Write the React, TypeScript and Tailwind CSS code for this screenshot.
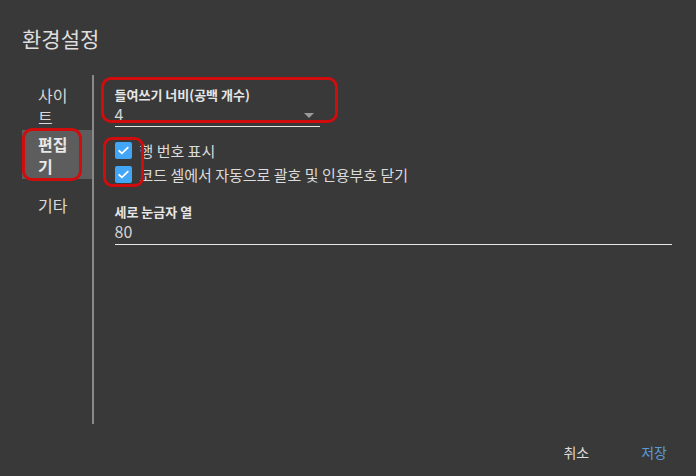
import React from 'react';

const font = { fontFamily: '"Noto Sans CJK KR", "Noto Sans", sans-serif' };

const Check = () => (
    <span className="w-[17px] h-[17px] rounded-[2px] bg-[#42a5f5] flex items-center justify-center flex-shrink-0">
        <svg width="13" height="13" viewBox="0 0 24 24" fill="none" stroke="white" strokeWidth="3.2" strokeLinecap="round" strokeLinejoin="round">
            <path d="M4 12.5l5 5L20 6.5" />
        </svg>
    </span>
);

const App = () => {
    return (
        <div className="relative w-[696px] h-[476px] bg-[#393939] text-[#e0e0e0] overflow-hidden" style={font}>
            <div className="pt-[24px] pl-[22px] text-[21px] leading-[28px] text-[#dedede]">환경설정</div>

            <div className="flex mt-[23px] h-[349px]">
                {/* Left - menu */}
                <div className="w-[70px] ml-[22px] flex flex-col text-[16px] leading-[22px] text-[#d8d8d8]">
                    <div className="pl-[16px] pt-[9px] pb-[2px] w-[56px]">사이<br />트</div>
                    <div className="pl-[16px] pt-[3px] bg-[#5d5d5d] h-[49px] font-bold text-[#e8e8e8]">편집<br />기</div>
                    <div className="pl-[16px] pt-[15px]">기타</div>
                </div>
                <div className="w-[1.5px] bg-[#8a8a8a]" />

                {/* Right - form */}
                <div className="flex-1 pl-[21px] pr-[24px] pt-[12px]">
                    <div className="w-[205px]">
                        <div className="text-[13px] leading-[16px] font-bold text-[#e6e6e6]">들여쓰기 너비(공백 개수)</div>
                        <div className="flex items-end justify-between h-[24px] pb-[2px] border-b-[1.5px] border-[#e8e8e8] text-[16px] leading-[20px] text-[#d6d6d6]">
                            <span>4</span>
                            <span className="mr-[6px] mb-[6px] w-0 h-0 border-l-[5px] border-r-[5px] border-t-[5px] border-l-transparent border-r-transparent border-t-[#9a9a9a]" />
                        </div>
                    </div>

                    <div className="mt-[15px] flex flex-col gap-[7px] text-[15px] leading-[17px] text-[#dcdcdc]">
                        <label className="flex items-center gap-[8px]"><Check />행 번호 표시</label>
                        <label className="flex items-center gap-[8px]"><Check />코드 셀에서 자동으로 괄호 및 인용부호 닫기</label>
                    </div>

                    <div className="mt-[21px]">
                        <div className="text-[13px] leading-[16px] font-bold text-[#e6e6e6]">세로 눈금자 열</div>
                        <div className="h-[25px] pt-[1px] border-b-[1.5px] border-[#e8e8e8] text-[16px] leading-[20px] text-[#d6d6d6]">80</div>
                    </div>
                </div>
            </div>

            <div className="flex justify-end gap-[52px] pr-[29px] pt-[18px] text-[14px]">
                <span className="text-[#dcdcdc]">취소</span>
                <span className="text-[#5b9bd5]">저장</span>
            </div>

            {/* red annotation boxes */}
            <div className="absolute left-[101px] top-[77px] w-[237px] h-[46px] border-[3px] border-[#d00c0c] rounded-[10px]" />
            <div className="absolute left-[22px] top-[128px] w-[60px] h-[53px] border-[3px] border-[#d00c0c] rounded-[10px]" />
            <div className="absolute left-[103px] top-[137px] w-[41px] h-[50px] border-[3px] border-[#d00c0c] rounded-[9px]" />
        </div>
    );
};

export default App;
